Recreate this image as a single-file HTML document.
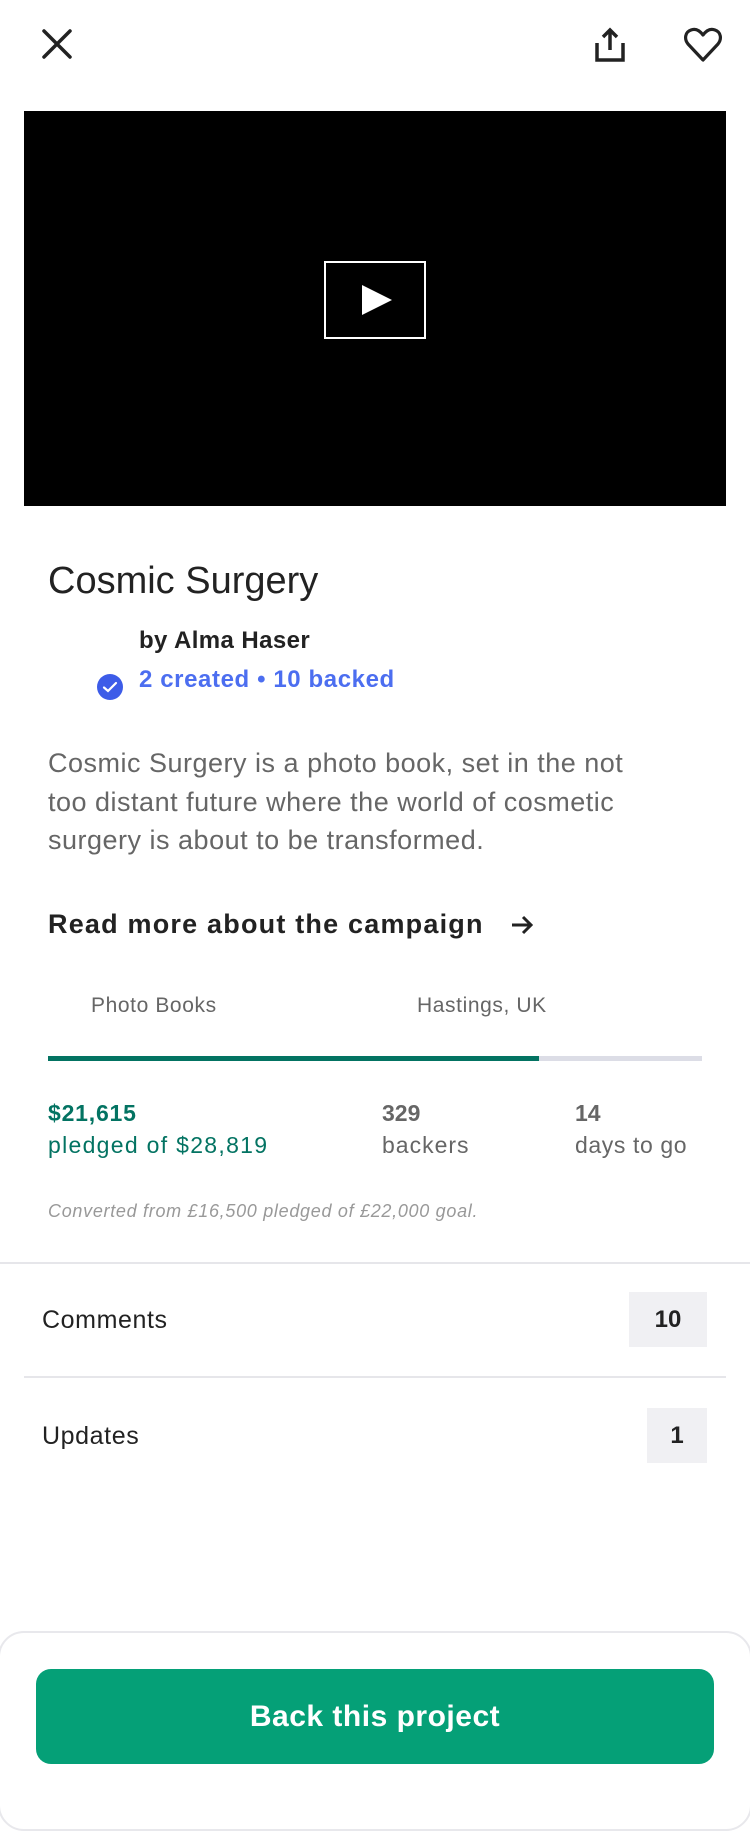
<!DOCTYPE html>
<html><head><meta charset="utf-8"><style>
*{margin:0;padding:0;box-sizing:border-box}
body{width:750px;height:1800px;background:#fff;font-family:"Liberation Sans",sans-serif;position:relative;overflow:hidden;color:#222}
.a{position:absolute;white-space:nowrap}
</style></head><body>
<svg class="a" style="left:40px;top:27px" width="34" height="34" viewBox="0 0 34 34"><path d="M4 4L30 30M30 4L4 30" stroke="#222" stroke-width="3.5" stroke-linecap="round"/></svg>
<svg class="a" style="left:592px;top:26px" width="36" height="38" viewBox="0 0 36 38"><path d="M18 4V24M11 11L18 4L25 11" stroke="#222" stroke-width="3.5" fill="none"/><path d="M5 17V34H31V17" stroke="#222" stroke-width="3.5" fill="none"/></svg>
<svg class="a" style="left:683px;top:27px" width="40" height="36" viewBox="0 0 40 36"><path d="M20 33L5 17C1 12 2 5 8 3C13 1 17 4 20 8C23 4 27 1 32 3C38 5 39 12 35 17Z" stroke="#222" stroke-width="3.2" fill="none" stroke-linejoin="round"/></svg>
<div class="a" style="left:24px;top:111px;width:702px;height:395px;background:#000"></div>
<div class="a" style="left:324px;top:261px;width:102px;height:78px;border:2px solid #fff"></div>
<svg class="a" style="left:360px;top:283px" width="34" height="34" viewBox="0 0 34 34"><path d="M2 2L32 17L2 32Z" fill="#fff"/></svg>
<div class="a" style="left:48px;top:560px;font-size:38px;color:#222">Cosmic Surgery</div>
<div class="a" style="left:139px;top:627px;font-size:24px;font-weight:bold;color:#222;letter-spacing:0.4px">by Alma Haser</div>
<svg class="a" style="left:97px;top:674px" width="26" height="26" viewBox="0 0 26 26"><circle cx="13" cy="13" r="13" fill="#3d5ce8"/><path d="M7 13.5L11 17L19 9" stroke="#fff" stroke-width="2.2" fill="none" stroke-linecap="round"/></svg>
<div class="a" style="left:139px;top:666px;font-size:24px;font-weight:bold;color:#4c6ef0;letter-spacing:0.6px">2 created • 10 backed</div>
<div class="a" style="left:48px;top:744px;font-size:27px;line-height:38.6px;color:#666;white-space:normal;width:605px;letter-spacing:0.5px">Cosmic Surgery is a photo book, set in the not too distant future where the world of cosmetic surgery is about to be transformed.</div>
<div class="a" style="left:48px;top:909px;font-size:27px;font-weight:bold;color:#222;letter-spacing:1.2px">Read more about the campaign</div>
<svg class="a" style="left:510px;top:914px" width="24" height="22" viewBox="0 0 24 22"><path d="M2 11H21M13 3L21 11L13 19" stroke="#222" stroke-width="3" fill="none"/></svg>
<div class="a" style="left:91px;top:994px;font-size:21px;color:#666;letter-spacing:0.6px">Photo Books</div>
<div class="a" style="left:417px;top:994px;font-size:21px;color:#666;letter-spacing:0.6px">Hastings, UK</div>
<div class="a" style="left:48px;top:1056px;width:654px;height:5px;background:#dcdde6"></div>
<div class="a" style="left:48px;top:1056px;width:491px;height:5px;background:#037362"></div>
<div class="a" style="left:48px;top:1100px;font-size:23px;font-weight:bold;color:#037362;letter-spacing:0.8px">$21,615</div>
<div class="a" style="left:48px;top:1132px;font-size:23px;color:#037362;letter-spacing:1.3px">pledged of $28,819</div>
<div class="a" style="left:382px;top:1100px;font-size:23px;font-weight:bold;color:#666">329</div>
<div class="a" style="left:382px;top:1132px;font-size:23px;color:#666;letter-spacing:1px">backers</div>
<div class="a" style="left:575px;top:1100px;font-size:23px;font-weight:bold;color:#666">14</div>
<div class="a" style="left:575px;top:1132px;font-size:23px;color:#666;letter-spacing:0.6px">days to go</div>
<div class="a" style="left:48px;top:1201px;font-size:18px;font-style:italic;color:#999;letter-spacing:0.7px">Converted from £16,500 pledged of £22,000 goal.</div>
<div class="a" style="left:0;top:1262px;width:750px;height:2px;background:#e6e6ea"></div>
<div class="a" style="left:42px;top:1306px;font-size:25px;color:#222;letter-spacing:0.6px">Comments</div>
<div class="a" style="left:629px;top:1292px;width:78px;height:55px;background:#f0f0f3;font-size:24px;font-weight:bold;text-align:center;line-height:55px;color:#222">10</div>
<div class="a" style="left:24px;top:1376px;width:702px;height:2px;background:#e6e6ea"></div>
<div class="a" style="left:42px;top:1422px;font-size:25px;color:#222;letter-spacing:0.6px">Updates</div>
<div class="a" style="left:647px;top:1408px;width:60px;height:55px;background:#f0f0f3;font-size:24px;font-weight:bold;text-align:center;line-height:55px;color:#222">1</div>
<div class="a" style="left:-2px;top:1631px;width:754px;height:200px;border:2px solid #e8e8ec;border-radius:26px;background:#fff"></div>
<div class="a" style="left:36px;top:1669px;width:678px;height:95px;background:#05a077;border-radius:15px;color:#fff;font-size:30px;font-weight:bold;text-align:center;line-height:95px;letter-spacing:0.5px">Back this project</div>
</body></html>
